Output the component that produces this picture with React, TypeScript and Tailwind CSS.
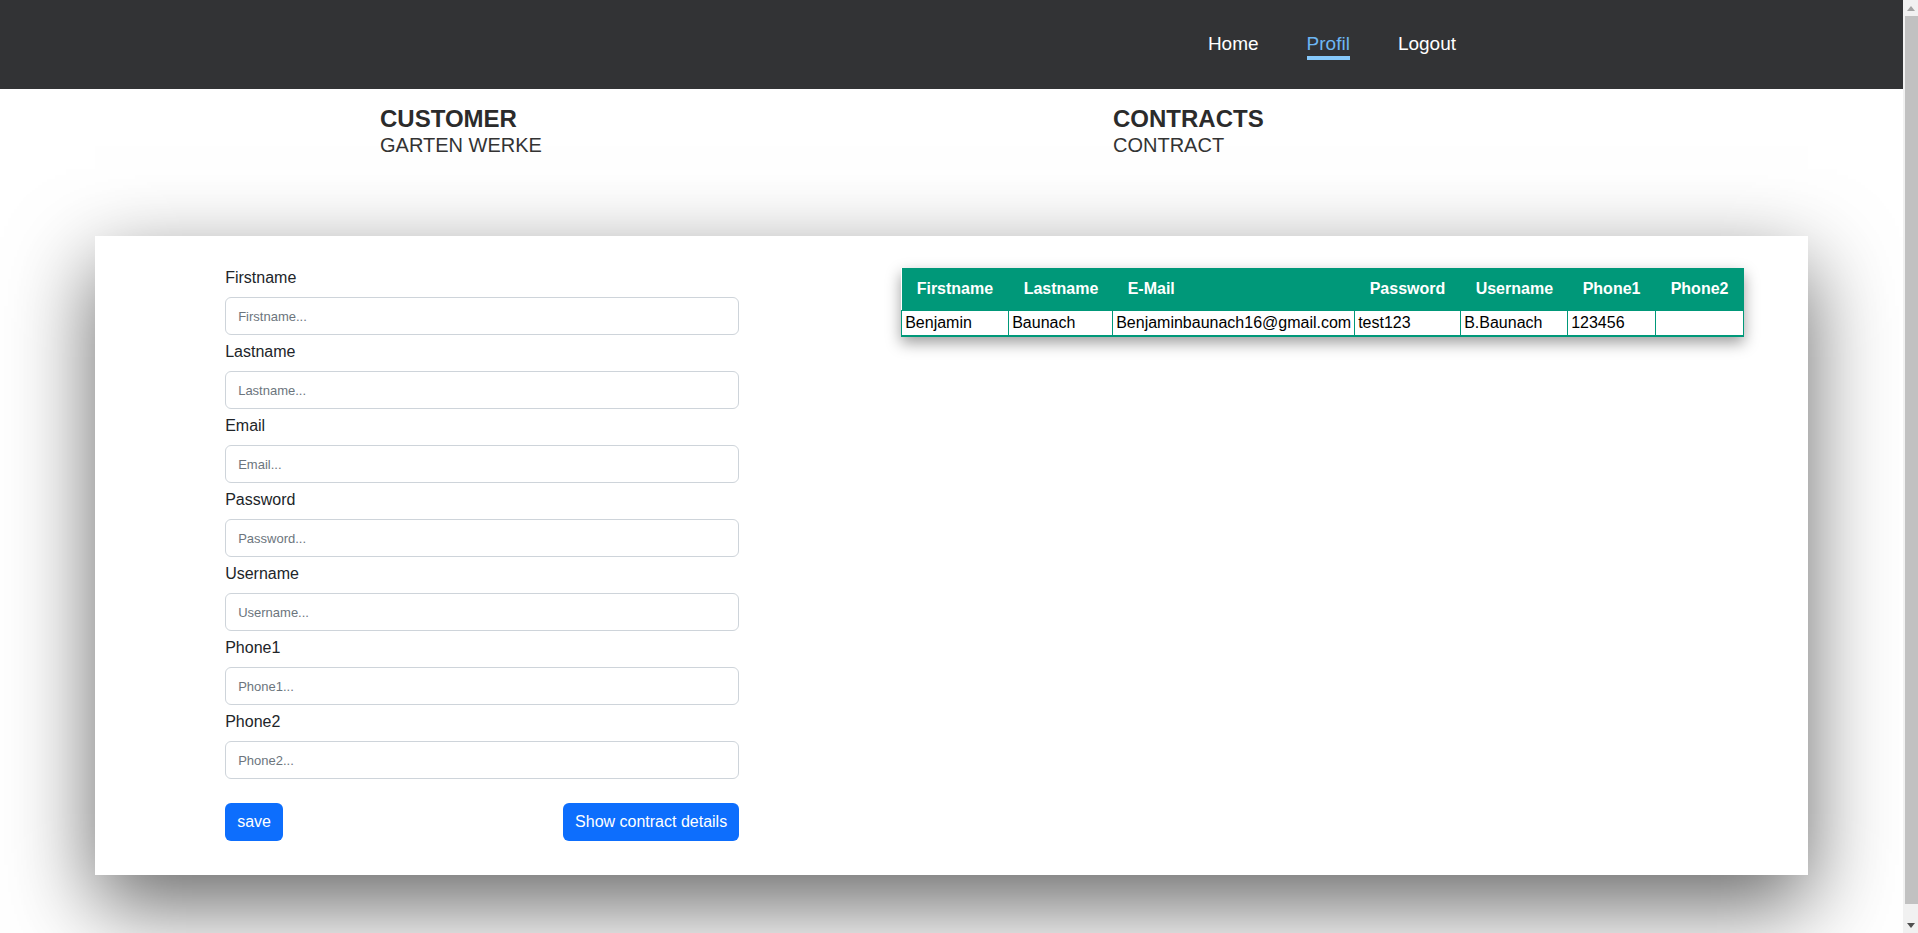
import React from "react";

const fields = ["Firstname", "Lastname", "Email", "Password", "Username", "Phone1", "Phone2"];

const columns = [
  { title: "Firstname", width: "w-[107px]", value: "Benjamin" },
  { title: "Lastname", width: "w-[104px]", value: "Baunach" },
  { title: "E-Mail", width: "w-[242px]", value: "Benjaminbaunach16@gmail.com" },
  { title: "Password", width: "w-[106px]", value: "test123" },
  { title: "Username", width: "w-[107px]", value: "B.Baunach" },
  { title: "Phone1", width: "w-[88px]", value: "123456" },
  { title: "Phone2", width: "w-[88px]", value: "" },
];

function NavBar() {
  return (
    <header className="h-[89px] bg-[#323335] flex items-center justify-end pr-[447px] pt-[3px]">
      <nav className="flex items-center gap-12 text-[19px] leading-[22px]">
        <a className="text-white pb-[1px] border-b-4 border-transparent">Home</a>
        <a className="text-[#6db6f3] pb-[1px] border-b-4 border-[#86c9fb]">Profil</a>
        <a className="text-white pb-[1px] border-b-4 border-transparent">Logout</a>
      </nav>
    </header>
  );
}

function Headings() {
  return (
    <div className="flex pl-[380px] pt-4 text-[#2b2b2b]">
      <div className="w-[733px]">
        <h2 className="text-[24px] leading-[28px] font-bold">CUSTOMER</h2>
        <p className="text-[20px] leading-[24px] text-[#333]">GARTEN WERKE</p>
      </div>
      <div>
        <h2 className="text-[24px] leading-[28px] font-bold">CONTRACTS</h2>
        <p className="text-[20px] leading-[24px] text-[#333]">CONTRACT</p>
      </div>
    </div>
  );
}

function CustomerForm() {
  return (
    <form className="w-[514px] ml-[130px] pt-[30px] pb-[34px]">
      {fields.map((field) => (
        <div key={field}>
          <label className="block text-base leading-6 mb-[7px] text-[#212529]">{field}</label>
          <input
            type="text"
            placeholder={`${field}...`}
            className="block w-full h-[38px] mb-[5px] px-3 text-[13px] bg-white border border-[#ced4da] rounded-md placeholder:text-[#6c757d] outline-none"
          />
        </div>
      ))}
      <div className="flex justify-between mt-6">
        <button type="button" className="h-[38px] px-3 rounded-md bg-[#0d6efd] text-white text-base">
          save
        </button>
        <button type="button" className="h-[38px] px-3 rounded-md bg-[#0d6efd] text-white text-base">
          Show contract details
        </button>
      </div>
    </form>
  );
}

function CustomerTable() {
  return (
    <table className="ml-[162px] mt-8 self-start border-collapse shadow-[0_6px_14px_rgba(0,0,0,0.38)] text-base">
      <thead>
        <tr className="bg-[#009879] text-white text-left">
          {columns.map((col) => (
            <th key={col.title} className={`${col.width} h-[42px] pl-[15px] font-bold whitespace-nowrap`}>
              {col.title}
            </th>
          ))}
        </tr>
      </thead>
      <tbody>
        <tr className="bg-white text-black">
          {columns.map((col) => (
            <td
              key={col.title}
              className="h-[26px] pl-[3px] pr-0 leading-6 border border-b-2 border-[#009879] whitespace-nowrap"
            >
              {col.value}
            </td>
          ))}
        </tr>
      </tbody>
    </table>
  );
}

// browser scrollbar as seen in the screenshot
function ScrollBar() {
  return (
    <aside className="sticky top-0 h-screen w-[15px] shrink-0 bg-[#f1f1f1] flex flex-col">
      <div className="h-[16px] flex items-center justify-center">
        <svg width="8" height="5" viewBox="0 0 8 5">
          <path d="M0 5 L4 0 L8 5 Z" fill="#a3a3a3" />
        </svg>
      </div>
      <div className="flex-1 ml-[2px] bg-[#c1c1c1]" />
      <div className="h-[29px] flex items-end justify-center pb-[5px]">
        <svg width="8" height="5" viewBox="0 0 8 5">
          <path d="M0 0 L8 0 L4 5 Z" fill="#505050" />
        </svg>
      </div>
    </aside>
  );
}

export default function App() {
  return (
    <div className="flex items-start bg-white font-['Liberation_Sans',Arial,sans-serif]">
      <div className="flex-1 min-w-0 pb-[75px] overflow-hidden">
        <NavBar />
        <Headings />
        <main className="w-[90%] mx-auto mt-[79px] bg-white flex shadow-[0_30px_80px_rgba(0,0,0,0.6)]">
          <CustomerForm />
          <CustomerTable />
        </main>
      </div>
      <ScrollBar />
    </div>
  );
}
